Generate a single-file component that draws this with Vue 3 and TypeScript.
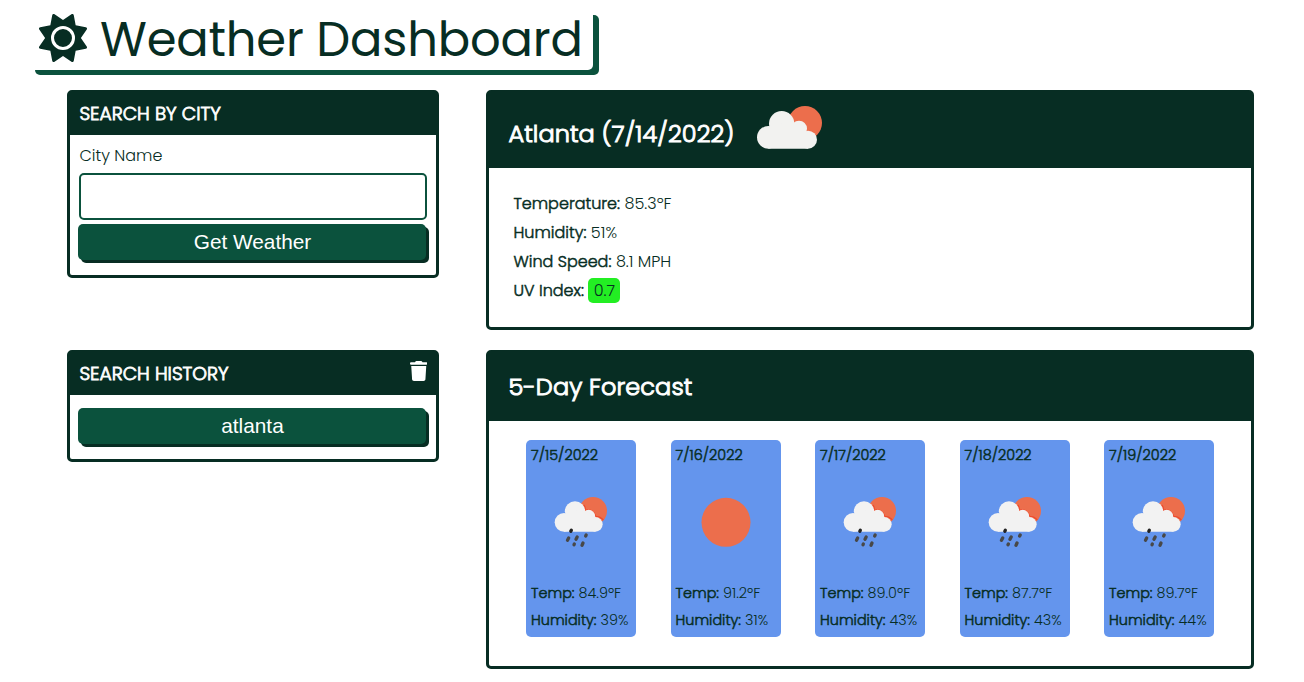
<script setup lang="ts">
interface Day {
  date: string
  temp: string
  humidity: string
  sunny?: boolean
}

const details = [
  { label: 'Temperature:', value: '85.3ºF', cls: 'temperature' },
  { label: 'Humidity:', value: '51%', cls: 'humidity' },
  { label: 'Wind Speed:', value: '8.1 MPH', cls: 'wind' },
  { label: 'UV Index:', value: '0.7', cls: 'uv' },
]

const days: Day[] = [
  { date: '7/15/2022', temp: '84.9ºF', humidity: '39%' },
  { date: '7/16/2022', temp: '91.2ºF', humidity: '31%', sunny: true },
  { date: '7/17/2022', temp: '89.0ºF', humidity: '43%' },
  { date: '7/18/2022', temp: '87.7ºF', humidity: '43%' },
  { date: '7/19/2022', temp: '89.7ºF', humidity: '44%' },
]

const history = ['atlanta']
</script>

<template>
  <div class="page">
    <h1 class="brand">
      <svg class="sun" viewBox="0 0 512 512"><path fill="currentColor" d="M361.5 1.2c5 2.1 8.6 6.6 9.6 11.9L391 121l107.9 19.8c5.3 1 9.8 4.6 11.9 9.6s1.5 10.7-1.6 15.2L446.9 256l62.3 90.3c3.1 4.5 3.7 10.2 1.6 15.2s-6.6 8.6-11.9 9.6L391 391 371.1 498.9c-1 5.3-4.6 9.8-9.6 11.9s-10.7 1.5-15.2-1.6L256 446.9l-90.3 62.3c-4.5 3.1-10.2 3.7-15.2 1.6s-8.6-6.6-9.6-11.9L121 391 13.1 371.1c-5.3-1-9.8-4.6-11.9-9.6s-1.5-10.7 1.6-15.2L65.1 256 2.8 165.7c-3.1-4.5-3.7-10.2-1.6-15.2s6.6-8.6 11.9-9.6L121 121 140.9 13.1c1-5.3 4.6-9.8 9.6-11.9s10.7-1.5 15.2 1.6L256 65.1 346.3 2.8c4.5-3.1 10.2-3.7 15.2-1.6zM160 256a96 96 0 1 1 192 0 96 96 0 1 1-192 0zm224 0a128 128 0 1 0-256 0 128 128 0 1 0 256 0z"/></svg>
      <span>Weather Dashboard</span>
    </h1>
    <main class="layout">
      <section class="card search">
        <header class="card-head"><h2 class="t-search">SEARCH BY CITY</h2></header>
        <form class="form" @submit.prevent>
          <label for="city">City Name</label>
          <input id="city" type="text" />
          <button type="button">Get Weather</button>
        </form>
      </section>

      <section class="card current">
        <header class="card-head wide">
          <h2 class="t-city">Atlanta (7/14/2022)</h2>
          <svg class="cloud" viewBox="825 55 210 145">
            <circle cx="975" cy="115" r="51" fill="#ec6e4c" />
            <g fill="#f2f2f0">
              <circle cx="905" cy="117" r="38" />
              <circle cx="865" cy="158" r="34" />
              <circle cx="957" cy="132" r="24" />
              <circle cx="984" cy="165" r="27" />
              <path d="M865 192V140L905 115L958 120L984 150V192Z" />
            </g>
          </svg>
        </header>
        <ul class="details">
          <li v-for="d in details" :key="d.label" :class="d.cls">
            <b>{{ d.label }}</b><span>{{ d.value }}</span>
          </li>
        </ul>
      </section>

      <section class="card history">
        <header class="card-head">
          <h2 class="t-history">SEARCH HISTORY</h2>
          <svg class="trash" viewBox="0 0 448 512"><path fill="#fff" d="M135.2 17.7L128 32H32C14.3 32 0 46.3 0 64S14.3 96 32 96H416c17.7 0 32-14.3 32-32s-14.3-32-32-32H320l-7.2-14.3C307.4 6.8 296.3 0 284.2 0H163.8c-12.1 0-23.2 6.8-28.6 17.7zM416 128H32L53.2 467c1.6 25.3 22.6 45 47.9 45H346.9c25.3 0 46.3-19.7 47.9-45L416 128z"/></svg>
        </header>
        <div class="history-list">
          <button v-for="h in history" :key="h" type="button">{{ h }}</button>
        </div>
      </section>

      <section class="card forecast">
        <header class="card-head wide"><h2 class="t-forecast">5-Day Forecast</h2></header>
        <div class="days">
          <article v-for="day in days" :key="day.date" class="day">
            <h3>{{ day.date }}</h3>
            <svg v-if="day.sunny" class="icon" viewBox="0 0 210 210"><circle cx="108" cy="112" r="73.5" fill="#ec6e4c" /></svg>
            <svg v-else class="icon" viewBox="0 0 210 210">
              <circle cx="144" cy="78" r="42" fill="#ec6e4c" />
              <path d="M117 60Q122 68 121 76Q143 70 152 94Q166 94 175 105" fill="none" stroke="#ef4a2c" stroke-width="4" />
              <g fill="#f2f2f2">
                <circle cx="90" cy="79" r="30.5" />
                <circle cx="57" cy="112" r="28" />
                <circle cx="131" cy="94" r="19.5" />
                <circle cx="151" cy="118" r="22" />
                <path d="M57 140V95L90 75L131 85L151 105V140Z" />
              </g>
              <g stroke="#484848" stroke-width="10" stroke-linecap="round">
                <path d="M77.500 139l1.500-3" stroke="#222" />
                <path d="M67.500 166l3.500-7M93 163l3.500-7M122 153l1.500-3M87 179l1-2M111 181l3-7" />
              </g>
            </svg>
            <p class="temp"><b>Temp:</b><span>{{ day.temp }}</span></p>
            <p class="hum"><b>Humidity:</b><span>{{ day.humidity }}</span></p>
          </article>
        </div>
      </section>
    </main>
  </div>
</template>

<style>
body { margin: 0; background: #fff; }
</style>

<style scoped>
* { box-sizing: border-box; }
h1, h2, h3, p, ul { margin: 0; padding: 0; }
.page {
  height: 682px;
  padding-top: 10px;
  overflow: hidden;
  color: #072d23;
  font-family: Poppins, Inter, "Open Sans", sans-serif;
  font-weight: 300;
  white-space: nowrap;
}
.brand {
  display: flex;
  width: 564px;
  height: 60px;
  margin-left: 29px;
  padding-left: 10px;
  border-radius: 5px;
  box-shadow: 6px 5px #0b523d;
  font-size: 48px;
  font-weight: 400;
  line-height: 60px;
  letter-spacing: -0.180px;
}
.sun { flex: none; width: 48px; height: 48px; margin: 4px 13px 0 0; }
.layout {
  display: grid;
  grid-template-columns: 372px 768px;
  grid-template-rows: 240px 319px;
  gap: 20px 47px;
  align-items: start;
  margin: 20px 0 0 67px;
}
.card { border: 3px solid #072d23; border-radius: 5px; }
.search { height: 188px; }
.current { height: 240px; }
.history { height: 112px; }
.forecast { height: 319px; }
.card-head {
  display: flex;
  justify-content: space-between;
  height: 42px;
  padding: 0 9px;
  background: #072d23;
  color: #fff;
}
h2, h3, b { font-weight: 300; -webkit-text-stroke: 0.5px currentColor; }
.card-head h2 { padding-left: 0.4px; font-size: 18.72px; line-height: 42px; -webkit-text-stroke-width: 0.8px; }
.card-head.wide { justify-content: flex-start; padding-left: 19px; }
.current .card-head { height: 75px; }
.forecast .card-head { height: 68px; }
.card-head.wide h2 { font-size: 24px; letter-spacing: 0.1px; -webkit-text-stroke-width: 1px; }
.current h2.t-city { line-height: 82px; width: 247px; }
.forecast h2.t-forecast { line-height: 68px; }
.cloud { flex: none; width: 70px; height: 48.33px; margin-top: 10.3px; }
.trash { width: 17.5px; height: 20px; margin-top: 8px; }
.form { padding: 6px 8px; }
.form label { display: block; height: 32px; padding-left: 1.5px; font-size: 16px; line-height: 29px; }
.form input {
  display: block;
  width: 348px;
  height: 47px;
  margin: 0 0 4px 1px;
  border: 2px solid #0b523d;
  border-radius: 5px;
  background: #fff;
  outline: none;
}
button {
  display: block;
  width: 348px;
  height: 36px;
  padding: 0 0 0 1px;
  border: 0;
  border-radius: 5px;
  background: #0b523d;
  box-shadow: 3px 3px #072d23;
  color: #fff;
  font: 20.8px/36px "Liberation Sans", Arial, sans-serif;
}
.history-list { padding: 13px 8px; }
.details { padding: 21px 24.5px; list-style: none; font-size: 16px; }
.details li { display: flex; align-items: center; height: 29px; line-height: 29px; }
.details b { margin-right: 4.5px; }
.uv span {
  width: 32px;
  height: 25px;
  border-radius: 5px;
  background: #23ee23;
  line-height: 25px;
  text-align: center;
}
.days { display: flex; justify-content: space-between; padding: 19px 37px; }
.day {
  width: 110px;
  height: 197px;
  padding: 0 5px;
  border-radius: 5px;
  background: #6495ed;
  font-size: 14.4px;
}
.day h3 { height: 45px; font-size: 14.4px; line-height: 30px; }
.icon { display: block; width: 70px; height: 70px; margin: 0 0 25px 14.3px; }
.day p { display: flex; height: 27px; line-height: 27px; }
.day b { margin-right: 4px; }
</style>
